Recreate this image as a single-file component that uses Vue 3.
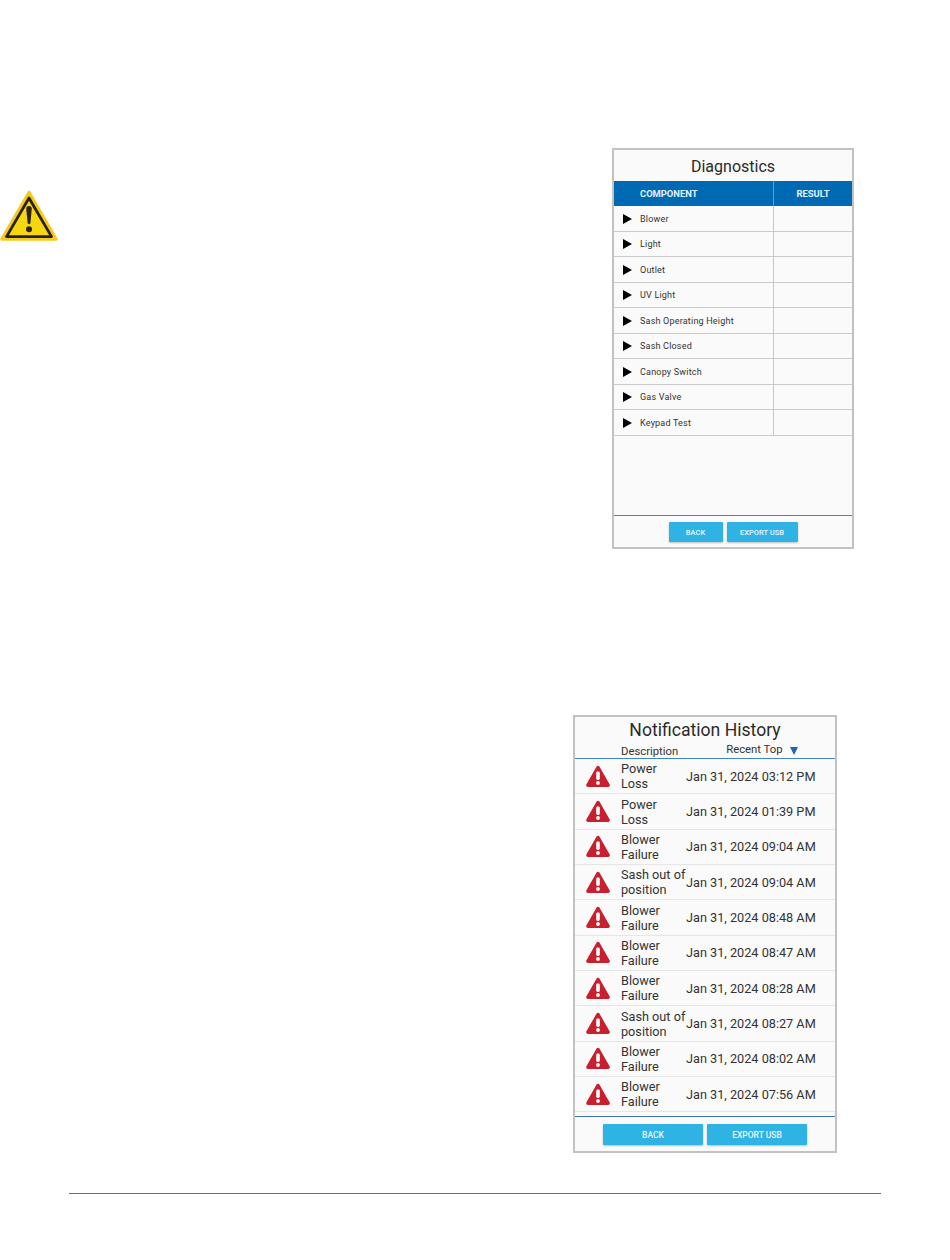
<template>
  <div class="page">
    <section class="block block-diag">
      <svg class="warn" viewBox="0 0 58 52" aria-hidden="true">
        <path d="M29 2.5 L56 49 H2 Z" fill="#f6d70f" stroke="#f4cb1c" stroke-width="3.4" stroke-linejoin="round" />
        <path d="M29 8 L51.5 46.6 H6.5 Z" fill="none" stroke="#2a2113" stroke-width="2.8" stroke-linejoin="round" />
        <path d="M26.2 18.5 C26.2 15.2 31.8 15.2 31.8 18.5 L30.4 33 C30.3 34.6 27.7 34.6 27.6 33 Z" fill="#2a2113" />
        <circle cx="29" cy="39.3" r="3" fill="#2a2113" />
      </svg>

      <div class="screen diag">
        <h2 class="diag-title">Diagnostics</h2>
        <div class="diag-head">
          <span class="col-name">COMPONENT</span>
          <span class="col-result">RESULT</span>
        </div>
        <div class="diag-body">
          <div v-for="item in components" :key="item" class="diag-row">
            <div class="col-name-cell">
              <span class="play"></span>
              <span>{{ item }}</span>
            </div>
            <div class="col-result-cell"></div>
          </div>
        </div>
        <div class="actions diag-actions">
          <button class="btn btn-back">BACK</button>
          <button class="btn btn-export">EXPORT USB</button>
        </div>
      </div>
    </section>

    <section class="block block-notif">
      <div class="screen notif">
        <h2 class="notif-title">Notification History</h2>
        <div class="notif-head">
          <span class="head-desc">Description</span>
          <span class="head-sort">Recent Top <span class="sort-arrow"></span></span>
        </div>
        <div class="notif-body">
          <div v-for="(row, i) in notifications" :key="i" class="notif-row">
            <svg class="alert" viewBox="0 0 24 23" aria-hidden="true">
              <path d="M12 2.6 L22 20.2 H2 Z" fill="#c8202f" stroke="#c8202f" stroke-width="3.6" stroke-linejoin="round" />
              <rect x="10.2" y="6.5" width="3.6" height="8.5" rx="1.4" fill="#fff" />
              <circle cx="12" cy="18" r="1.9" fill="#fff" />
            </svg>
            <span class="notif-desc">{{ row.desc }}</span>
            <span class="notif-date">{{ row.date }}</span>
          </div>
        </div>
        <div class="actions notif-actions">
          <button class="btn btn-wide">BACK</button>
          <button class="btn btn-wide">EXPORT USB</button>
        </div>
      </div>
    </section>

    <div class="page-rule"></div>
  </div>
</template>

<script setup>
const components = [
  "Blower",
  "Light",
  "Outlet",
  "UV Light",
  "Sash Operating Height",
  "Sash Closed",
  "Canopy Switch",
  "Gas Valve",
  "Keypad Test",
];

const notifications = [
  { desc: "Power Loss", date: "Jan 31, 2024 03:12 PM" },
  { desc: "Power Loss", date: "Jan 31, 2024 01:39 PM" },
  { desc: "Blower Failure", date: "Jan 31, 2024 09:04 AM" },
  { desc: "Sash out of position", date: "Jan 31, 2024 09:04 AM" },
  { desc: "Blower Failure", date: "Jan 31, 2024 08:48 AM" },
  { desc: "Blower Failure", date: "Jan 31, 2024 08:47 AM" },
  { desc: "Blower Failure", date: "Jan 31, 2024 08:28 AM" },
  { desc: "Sash out of position", date: "Jan 31, 2024 08:27 AM" },
  { desc: "Blower Failure", date: "Jan 31, 2024 08:02 AM" },
  { desc: "Blower Failure", date: "Jan 31, 2024 07:56 AM" },
];
</script>

<style>
html,
body {
  background: #fff;
}
</style>

<style scoped>
.page {
  width: 950px;
  height: 1260px;
  padding-top: 148px;
  box-sizing: border-box;
  background: #fff;
  font-family: Roboto, "Liberation Sans", sans-serif;
  color: #222;
  overflow: hidden;
}

.block {
  display: flex;
}

.block-diag {
  justify-content: space-between;
  padding-right: 96px;
}

.block-notif {
  justify-content: flex-end;
  margin-top: 166px;
  padding-right: 113px;
}

.warn {
  width: 58px;
  height: 52px;
  margin-top: 42px;
}

.screen {
  display: flex;
  flex-direction: column;
  box-sizing: border-box;
  background: #fafafa;
  border: 2px solid #c2c2c2;
}

/* diagnostics */
.diag {
  width: 242px;
  height: 401px;
}

.diag-title {
  margin: 0;
  height: 31px;
  line-height: 33px;
  font-size: 16px;
  font-weight: 400;
  text-align: center;
  color: #2a2a2a;
}

.diag-head {
  display: grid;
  grid-template-columns: 160px 1fr;
  height: 25px;
  background: #0069b4;
  color: #e4f2fb;
  font-size: 9.4px;
  font-weight: 700;
  line-height: 25px;
  flex: none;
}

.col-name {
  padding-left: 26px;
  border-right: 1px solid #5f9fce;
}

.col-result {
  text-align: center;
}

.diag-body {
  flex: 1;
}

.diag-row {
  display: grid;
  grid-template-columns: 160px 1fr;
  height: 25.5px;
  box-sizing: border-box;
  border-bottom: 1px solid #cbcbcb;
  font-size: 9px;
  color: #333;
}

.col-name-cell {
  display: flex;
  align-items: center;
  padding-top: 1px;
  border-right: 1px solid #c8c8c8;
  letter-spacing: 0.2px;
}

.play {
  width: 0;
  height: 0;
  margin: 0 8px 0 9px;
  border-left: 9px solid #000;
  border-top: 5.5px solid transparent;
  border-bottom: 5.5px solid transparent;
}

.actions {
  display: flex;
  justify-content: center;
  flex: none;
  box-sizing: border-box;
}

.diag-actions {
  height: 32px;
  padding-top: 6px;
  gap: 4px;
  border-top: 1px solid #3f85c0;
}

.btn {
  padding: 0;
  border: 0;
  border-radius: 1px;
  background: #2fb2e4;
  color: #e6f6fd;
  font-family: inherit;
  font-size: 7.5px;
  font-weight: 500;
  box-shadow: 0 1px 2px rgba(0, 0, 0, 0.25);
}

.btn-back {
  width: 54px;
  height: 20px;
}

.btn-export {
  width: 71px;
  height: 20px;
}

/* notification history */
.notif {
  width: 264px;
  height: 438px;
}

.notif-title {
  margin: 0;
  height: 26px;
  line-height: 26px;
  font-size: 17.6px;
  font-weight: 400;
  text-align: center;
  color: #2a2a2a;
  flex: none;
}

.notif-head {
  display: flex;
  height: 16px;
  box-sizing: border-box;
  border-bottom: 1.5px solid #3f85c0;
  font-size: 11.3px;
  color: #333;
  flex: none;
}

.head-desc {
  margin-left: 46px;
  line-height: 17px;
}

.head-sort {
  margin-left: 48px;
  line-height: 13px;
}

.sort-arrow {
  display: inline-block;
  width: 0;
  height: 0;
  margin-left: 5px;
  vertical-align: -2px;
  border-top: 8px solid #1f66ad;
  border-left: 4.5px solid transparent;
  border-right: 4.5px solid transparent;
}

.notif-body {
  flex: 1;
}

.notif-row {
  display: grid;
  grid-template-columns: 46px 65px 1fr;
  align-items: center;
  height: 35.35px;
  box-sizing: border-box;
  border-bottom: 1px solid #e6e6e6;
  font-size: 12.7px;
  line-height: 15px;
  color: #333;
}

.alert {
  width: 24px;
  height: 23px;
  margin-left: 11px;
}

.notif-date {
  white-space: nowrap;
}

.notif-actions {
  height: 35px;
  padding-top: 7px;
  gap: 4px;
  border-top: 1.5px solid #3f74ad;
}

.btn-wide {
  width: 100px;
  height: 21px;
  font-size: 8.5px;
}

.page-rule {
  height: 1px;
  margin: 40px 69px 0;
  background: #3b72c8;
}
</style>
